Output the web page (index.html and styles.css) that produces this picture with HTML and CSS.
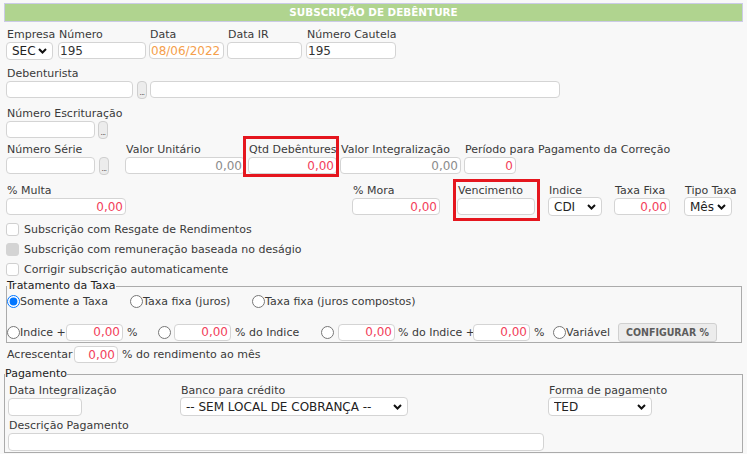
FILE: index.html
```html
<!DOCTYPE html>
<html lang="pt-BR">
<head>
<meta charset="utf-8">
<title>Subscrição de Debênture</title>
<link rel="stylesheet" href="styles.css">
</head>
<body>
<div class="page">
  <div class="title">SUBSCRIÇÃO DE DEBÊNTURE</div>

  <div class="row r1">
    <div class="field f-empresa"><label>Empresa</label><select class="sel h18"><option>SEC</option></select></div>
    <div class="field f-numero"><label>Número</label><input class="inp" value="195"></div>
    <div class="field f-data"><label>Data</label><input class="inp orange" value="08/06/2022"></div>
    <div class="field f-datair"><label>Data IR</label><input class="inp" value=""></div>
    <div class="field f-cautela"><label>Número Cautela</label><input class="inp" value="195"></div>
  </div>

  <div class="row r2">
    <div class="field">
      <label>Debenturista</label>
      <div class="line">
        <input class="inp w127" value="">
        <button class="dots ml4"><span>...</span></button>
        <input class="inp w410 ml3" value="">
      </div>
    </div>
  </div>

  <div class="row r3">
    <div class="field">
      <label>Número Escrituração</label>
      <div class="line">
        <input class="inp w89" value="">
        <button class="dots ml3"><span>...</span></button>
      </div>
    </div>
  </div>

  <div class="row r4">
    <div class="field f-serie">
      <label>Número Série</label>
      <div class="line">
        <input class="inp w89" value="">
        <button class="dots ml4"><span>...</span></button>
      </div>
    </div>
    <div class="field f-valunit"><label>Valor Unitário</label><input class="inp num grey" value="0,00"></div>
    <div class="field f-qtd hl hl-qtd"><label>Qtd Debêntures</label><input class="inp num red" value="0,00"></div>
    <div class="field f-valint"><label>Valor Integralização</label><input class="inp num grey" value="0,00"></div>
    <div class="field f-periodo"><label>Período para Pagamento da Correção</label><input class="inp num red" value="0"></div>
  </div>

  <div class="row r5">
    <div class="field f-multa"><label>% Multa</label><input class="inp num red" value="0,00"></div>
    <div class="field f-mora"><label>% Mora</label><input class="inp num red" value="0,00"></div>
    <div class="field f-venc hl hl-venc"><label>Vencimento</label><input class="inp" value=""></div>
    <div class="field f-indice"><label>Indice</label><select class="sel h19"><option>CDI</option></select></div>
    <div class="field f-taxa"><label>Taxa Fixa</label><input class="inp num red" value="0,00"></div>
    <div class="field f-tipo"><label>Tipo Taxa</label><select class="sel h19"><option>Mês</option></select></div>
  </div>

  <div class="checks">
    <label class="chk"><input type="checkbox" class="cb"><span>Subscrição com Resgate de Rendimentos</span></label>
    <label class="chk"><input type="checkbox" class="cb" disabled><span>Subscrição com remuneração baseada no deságio</span></label>
    <label class="chk"><input type="checkbox" class="cb"><span>Corrigir subscrição automaticamente</span></label>
  </div>

  <fieldset class="fs fs-taxa">
    <legend>Tratamento da Taxa</legend>
    <div class="trow1">
      <label class="opt opt1"><input type="radio" name="tt" checked><span>Somente a Taxa</span></label>
      <label class="opt opt2"><input type="radio" name="tt"><span>Taxa fixa (juros)</span></label>
      <label class="opt"><input type="radio" name="tt"><span>Taxa fixa (juros compostos)</span></label>
    </div>
    <div class="trow2">
      <div class="grp gA">
        <input type="radio" name="tt"><span class="t-idx">Indice +</span>
        <input class="inp w57 num red" value="0,00"><span class="ml4">%</span>
      </div>
      <div class="grp gB">
        <input type="radio" name="tt">
        <input class="inp w57 num red ml3" value="0,00"><span class="ml4">% do Indice</span>
      </div>
      <div class="grp gC">
        <input type="radio" name="tt">
        <input class="inp w57 num red ml4" value="0,00"><span class="t-doidx ml3">% do Indice +</span>
        <input class="inp w57 num red" value="0,00"><span class="ml4">%</span>
      </div>
      <div class="grp gD">
        <input type="radio" name="tt"><span>Variável</span>
      </div>
      <button class="cfg">CONFIGURAR %</button>
    </div>
  </fieldset>

  <div class="acr">
    <span class="t-acr">Acrescentar</span>
    <input class="inp w44 num red" value="0,00">
    <span class="ml4">% do rendimento ao mês</span>
  </div>

  <fieldset class="fs fs-pag">
    <legend>Pagamento</legend>
    <div class="prow1">
      <div class="field f-dataint"><label>Data Integralização</label><input class="inp h18i" value=""></div>
      <div class="field f-banco"><label>Banco para crédito</label><select class="sel h19"><option>-- SEM LOCAL DE COBRANÇA --</option></select></div>
      <div class="field f-forma"><label>Forma de pagamento</label><select class="sel h19"><option>TED</option></select></div>
    </div>
    <div class="prow2">
      <div class="field f-desc"><label>Descrição Pagamento</label><input class="inp h18i" value=""></div>
    </div>
  </fieldset>
</div>
</body>
</html>
```

FILE: styles.css
```css
* { box-sizing: border-box; }

html, body {
  margin: 0;
  padding: 0;
  background: #f8f8f8;
}

body {
  font: 11px/15px "DejaVu Sans", sans-serif;
  color: #3a3a3a;
}

.page {
  width: 747px;
  height: 454px;
  overflow: hidden;
}

.title {
  margin: 3px 4px 0;
  height: 19px;
  background: #b0d48f;
  border: 1px solid #cbcbe6;
  color: #fff;
  font-weight: bold;
  font-size: 10.4px;
  line-height: 17px;
  text-align: center;
}

.row {
  display: flex;
  align-items: flex-start;
  padding-left: 6px;
}

.r1 { margin-top: 5px; }
.r2 { margin-top: 6px; }
.r3 { margin-top: 7px; }
.r4 { margin-top: 3px; }
.r5 { margin-top: 8px; }

.field {
  display: flex;
  flex-direction: column;
  flex: none;
}

.field > label {
  display: block;
  height: 15px;
  line-height: 15px;
  white-space: nowrap;
  padding-left: 1px;
}

.line {
  display: flex;
  align-items: flex-start;
}

.inp {
  display: block;
  width: 100%;
  height: 17px;
  margin: 0;
  padding: 0 2px 0 1px;
  border: 1px solid #d4d4d4;
  border-radius: 4px;
  background: #fff;
  font: 12px "DejaVu Sans", sans-serif;
  color: #333;
  outline: none;
}

.h18i { height: 18px; }

.num { text-align: right; }
.red { color: #f2415b; }
.grey { color: #8c8c8c; }
.orange { color: #f5a04c; }

.sel {
  display: block;
  width: 100%;
  margin: 0;
  padding: 0 16px 0 5px;
  border: 1px solid #d4d4d4;
  border-radius: 4px;
  background: #fff url("data:image/svg+xml,%3Csvg xmlns='http://www.w3.org/2000/svg' width='9' height='6' viewBox='0 0 9 6'%3E%3Cpath d='M1 1l3.5 3.5L8 1' fill='none' stroke='%23111' stroke-width='2'/%3E%3C/svg%3E") no-repeat right 5px center;
  -webkit-appearance: none;
  appearance: none;
  font: 12px "DejaVu Sans", sans-serif;
  color: #222;
  outline: none;
}

.h18 { height: 18px; }
.h19 { height: 19px; margin-top: -1px; }

.dots {
  flex: none;
  display: flex;
  align-items: flex-end;
  justify-content: center;
  width: 10px;
  height: 18px;
  margin-top: 0;
  padding: 0 0 3px;
  border: 1px solid #cfcfcf;
  border-radius: 4px;
  background: #ececec;
  overflow: hidden;
}

.dots span {
  display: block;
  font: 7px/4px "DejaVu Sans", sans-serif;
  height: 4px;
  color: #333;
  letter-spacing: -0.6px;
  white-space: nowrap;
}

.ml3 { margin-left: 3px; }
.ml4 { margin-left: 4px; }

.w44 { width: 44px; flex: none; }
.w57 { width: 57px; flex: none; }
.w89 { width: 89px; flex: none; }
.w127 { width: 127px; flex: none; }
.w410 { width: 410px; flex: none; }

/* row 1 */
.f-empresa { width: 47px; margin-right: 5px; }
.f-numero  { width: 88px; margin-right: 3px; }
.f-data    { width: 75px; margin-right: 3px; }
.f-datair  { width: 75px; margin-right: 4px; }
.f-cautela { width: 90px; }

/* row 4 */
.f-serie   { width: 103px; margin-right: 16px; }
.f-valunit { width: 120px; margin-right: 3px; }
.f-qtd     { width: 89px;  margin-right: 3px; }
.f-valint  { width: 121px; margin-right: 3px; }
.f-periodo { width: 52px; }

/* row 5 */
.f-multa  { width: 120px; margin-right: 226px; }
.f-mora   { width: 88px;  margin-right: 17px; }
.f-venc   { width: 78px;  margin-right: 13px; }
.f-indice { width: 54px;  margin-right: 12px; }
.f-taxa   { width: 56px;  margin-right: 14px; }
.f-tipo   { width: 48px; }

/* highlight boxes */
.hl { position: relative; }
.hl::after {
  content: "";
  position: absolute;
  border: 3px solid #e5161e;
  pointer-events: none;
}
.hl-qtd::after  { top: -6px; left: -5px; right: -2px; bottom: -3px; }
.hl-venc::after { top: -4px; left: -4px; right: -5px; bottom: -6px; }

/* checkboxes */
.checks {
  margin-top: 3px;
  padding-left: 6px;
}

.chk {
  display: flex;
  align-items: center;
  height: 20px;
  white-space: nowrap;
}

.cb {
  -webkit-appearance: none;
  appearance: none;
  width: 13px;
  height: 13px;
  margin: 0 5px 0 0;
  border: 1px solid #d0d0d0;
  border-radius: 3px;
  background: #fff;
  flex: none;
}

.cb:disabled {
  background: #d4d4d4;
  border-color: #d4d4d4;
}

/* fieldsets */
.fs {
  margin: 0;
  border: 1px solid #ababab;
  min-width: 0;
}

.fs legend {
  padding: 0;
  line-height: 14px;
  color: #222;
}

.fs-taxa {
  margin-left: 6px;
  width: 736px;
  padding: 0 0 0 0;
}

.trow1 {
  display: flex;
  align-items: center;
  height: 16px;
  white-space: nowrap;
}

.opt {
  display: flex;
  align-items: center;
  flex: none;
}

.opt1 { width: 123px; }
.opt2 { width: 122px; }

input[type="radio"] {
  width: 13px;
  height: 13px;
  margin: 0;
  flex: none;
}

.trow2 {
  display: flex;
  align-items: center;
  height: 20px;
  margin-top: 13px;
  white-space: nowrap;
}

.grp {
  display: flex;
  align-items: center;
  flex: none;
}

.gA { width: 151px; }
.gB { width: 163px; }
.gC { width: 232px; }
.gD { width: 65px; }

.t-idx { width: 46px; flex: none; }
.t-doidx { width: 75px; flex: none; }

.cfg {
  flex: none;
  width: 99px;
  height: 19px;
  margin: 0;
  padding: 0;
  border: 1px solid #d0d0d0;
  border-radius: 3px;
  background: #ececec;
  font: bold 10.5px/17px "DejaVu Sans Condensed", "DejaVu Sans", sans-serif;
  color: #5c5c5c;
  text-align: center;
}

.acr {
  display: flex;
  align-items: center;
  height: 17px;
  margin-top: 3px;
  padding-left: 7px;
  white-space: nowrap;
}

.t-acr { width: 67px; flex: none; }

.fs-pag {
  margin: 4px 4px 0;
  width: 739px;
  padding: 2px 0 1px 3px;
}

.fs-pag legend { margin-left: -3px; }

.prow1 {
  display: flex;
  align-items: flex-start;
}

.f-dataint { width: 74px; margin-right: 98px; }
.f-banco   { width: 228px; margin-right: 140px; }
.f-forma   { width: 104px; }

.prow2 {
  display: flex;
  margin-top: 2px;
}

.f-desc { width: 536px; }
```
